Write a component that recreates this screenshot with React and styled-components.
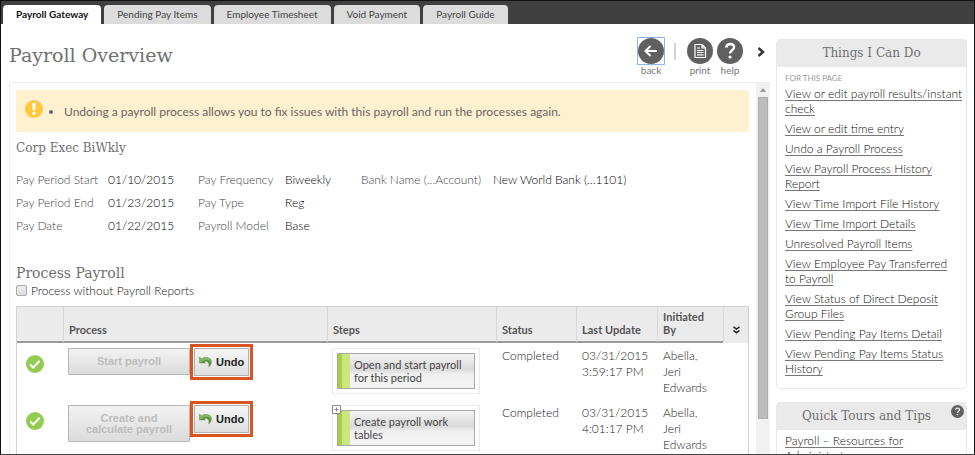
import React from "react";
import styled, { createGlobalStyle, css } from "styled-components";

const sans = 'Lato, "Open Sans", sans-serif';
const slab = '"DejaVu Serif", "Liberation Serif", serif';
const arial = '"Liberation Sans", Arial, sans-serif';

const GlobalStyle = createGlobalStyle`
  * { box-sizing: border-box; }
  body { margin: 0; background: #fff; font-family: ${sans}; font-size: 12px; font-weight: 300; color: #444; }
  button { font: inherit; color: inherit; }
  h1, h2, h3, ul, dl, dd { margin: 0; padding: 0; }
  h1, h2, h3 { font-weight: 400; }
`;

const Frame = styled.div`
  height: 100vh;
  display: flex;
  flex-direction: column;
  overflow: hidden;
  border: 1px solid #111;
  border-bottom-color: #444;
`;

const TabBar = styled.nav`
  flex: none;
  display: flex;
  gap: 3px;
  height: 23px;
  padding: 4px 2px 0;
  background: #404040;
`;

const Tab = styled.button`
  padding: 0 13px;
  border: 0;
  border-radius: 4px 4px 0 0;
  background: ${(p) => (p.$active ? "#fff" : "#dcdcdc")};
  color: ${(p) => (p.$active ? "#111" : "#444")};
  font-size: 10px;
  font-weight: ${(p) => (p.$active ? 700 : 400)};
  line-height: 17px;
  white-space: nowrap;
`;

const Body = styled.div`
  flex: 1;
  min-height: 0;
  display: flex;
  gap: 6px;
  padding: 0 7px 0 8px;
`;

const Main = styled.main`
  flex: 1;
  min-width: 0;
  display: flex;
  flex-direction: column;
`;

const PageHead = styled.header`
  flex: none;
  display: flex;
  justify-content: space-between;
  height: 58px;
  padding: 14px 5px 0 0;
`;

const PageTitle = styled.h1`
  padding-top: 3px;
  font-family: ${slab};
  font-size: 19px;
  line-height: 28px;
  color: #707070;
`;

const Tools = styled.div`
  display: flex;
  align-items: flex-start;
  gap: 4px;
`;

const Tool = styled.button`
  display: flex;
  flex-direction: column;
  align-items: center;
  width: 26px;
  padding: 0;
  border: 0;
  background: none;
  font-size: 10px;
  font-weight: 400;
  line-height: 12px;
  color: #777;
`;

const ToolIcon = styled.span`
  display: block;
  height: 26px;
  ${(p) => p.$focused && css`outline: 1px solid #8ab4f8;`}
  svg { display: block; }
`;

const Divider = styled.span`
  width: 2px;
  height: 17px;
  margin: 5px 7px 0 6px;
  background: #d3d3d3;
`;

const Collapse = styled.button`
  padding: 9px 0 0;
  margin-left: 10px;
  border: 0;
  background: none;
  svg { display: block; }
`;

const Panel = styled.section`
  flex: 1;
  min-height: 0;
  display: flex;
  gap: 7px;
  border: solid #eee;
  border-width: 1px 0 0 1px;
`;

const Content = styled.div`
  flex: 1;
  min-width: 0;
  padding: 7px 0 0 6px;
  overflow: hidden;
`;

const Scrollbar = styled.div`
  flex: none;
  display: flex;
  flex-direction: column;
  align-items: center;
  width: 14px;
  padding-top: 5px;
  background: #f1f1f1;
`;

const Thumb = styled.div`
  width: 10px;
  height: 88%;
  margin-top: 5px;
  border: 1px solid #adadad;
  background: #bcbcbc;
`;

const Alert = styled.div`
  display: flex;
  align-items: center;
  gap: 10px;
  height: 42px;
  padding: 0 9px;
  border-radius: 2px;
  background: #fff0cf;
  font-size: 12px;
  font-weight: 400;
  color: #666;
  svg { flex: none; margin-bottom: 5px; }
  ul { padding-left: 11px; }
`;

const Subtitle = styled.h2`
  margin-top: ${(p) => (p.$spaced ? "26px" : "6px")};
  font-family: ${slab};
  font-size: ${(p) => (p.$spaced ? "14px" : "12px")};
  line-height: 20px;
  color: #707070;
`;

const Facts = styled.dl`
  display: grid;
  grid-template-columns: 92px 90px 87px 76px 132px 1fr;
  grid-auto-rows: 23px;
  margin-top: 10px;
  line-height: 23px;
  white-space: nowrap;
  dt { color: #444; }
  dd { color: #000; }
`;

const CheckLabel = styled.label`
  display: flex;
  align-items: center;
  gap: 4px;
  height: 15px;
  color: #111;
`;

const Check = styled.input`
  appearance: none;
  width: 11px;
  height: 11px;
  margin: 0;
  border: 1px solid #aaa;
  border-radius: 2px;
  background: linear-gradient(#eee, #ddd);
`;

const Grid = styled.table`
  width: 100%;
  margin-top: 8px;
  table-layout: fixed;
  border-collapse: separate;
  border-spacing: 0;
  border: solid #d2d2d2;
  border-width: 1px 1px 0 1px;
`;

const Col = styled.col`
  width: ${(p) => p.$w}px;
`;

const Th = styled.th`
  height: 36px;
  padding: 0 5px 5px;
  border-left: ${(p) => (p.$first ? 0 : 1)}px solid #d8d8d8;
  border-bottom: 2px solid ${(p) => (p.$last ? "#ebebeb" : "#9b9b9b")};
  background: #ebebeb;
  font-size: 11px;
  line-height: 13px;
  font-weight: 700;
  text-align: ${(p) => (p.$last ? "center" : "left")};
  vertical-align: bottom;
  color: #555;
`;

const Td = styled.td`
  height: 57px;
  padding: ${(p) => (p.$pad ? p.$pad : "5px 0 0 6px")};
  vertical-align: top;
  line-height: 16px;
  color: #222;
  svg { display: block; }
`;

const ProcessCell = styled.div`
  display: flex;
  align-items: flex-start;
`;

const ProcessButton = styled.button`
  width: 122px;
  min-height: 27px;
  margin-top: 4px;
  padding: 1px 16px;
  border: 1px solid #b5b5b5;
  border-radius: 1px;
  background: linear-gradient(#f2f2f2, #dcdcdc);
  font: bold 11px/11px ${arial};
  color: #bdbdbd;
  ${(p) => p.$tall && css`min-height: 37px;`}
`;

const Highlight = styled.div`
  width: 63px;
  padding: 1px;
  border: 3px solid #d9541e;
`;

const UndoButton = styled.button`
  display: flex;
  align-items: center;
  gap: 4px;
  width: 100%;
  height: 28px;
  padding: 0 4px;
  border: 1px solid #b0b0b0;
  background: linear-gradient(#f6f6f6, #dedede);
  font: bold 11px/14px ${arial};
  color: #222;
  svg { flex: none; }
`;

const Step = styled.div`
  position: relative;
  width: 148px;
  padding: 4px;
  border: 1px solid #eaeaea;
`;

const StepButton = styled.button`
  display: flex;
  align-items: flex-start;
  width: 100%;
  height: 36px;
  padding: 4px 4px 0 16px;
  border: 1px solid #a8a8a8;
  background:
    linear-gradient(90deg, #a8cf3c 4px, #cbe57f 4px) left / 12px 100% no-repeat,
    linear-gradient(#f3f3f3, #dadada 45%, #f0f0f0 60%, #f4f4f4);
  font-size: 11px;
  font-weight: 400;
  line-height: 13px;
  text-align: left;
  color: #444;
`;

const Expander = styled.button`
  position: absolute;
  top: -1px;
  left: -1px;
  padding: 0;
  border: 0;
  background: #fff;
`;

const Side = styled.aside`
  flex: none;
  width: 191px;
  padding-top: 15px;
`;

const Card = styled.section`
  margin-bottom: 13px;
  padding-bottom: 12px;
  border: 1px solid #e8e8e8;
  border-radius: 4px;
`;

const CardHead = styled.header`
  position: relative;
  height: 27px;
  background: #eaeaea;
  text-align: center;
  button { position: absolute; top: 2px; right: 2px; padding: 0; border: 0; background: none; }
  svg { display: block; }
`;

const CardTitle = styled.h2`
  padding-right: ${(p) => (p.$help ? "10px" : 0)};
  font-family: ${slab};
  font-size: 12px;
  line-height: 27px;
  color: #707070;
`;

const Caption = styled.h3`
  padding: 5px 0 0 8px;
  font-size: 8px;
  line-height: 13px;
  color: #999;
`;

const Links = styled.ul`
  display: flex;
  flex-direction: column;
  gap: 5px;
  padding: ${(p) => (p.$first ? "1px" : "3px")} 0 0 8px;
  list-style: none;
  font-size: 12px;
  line-height: 15px;
  white-space: pre;
  a { color: #111; text-decoration-color: #777; text-underline-offset: 2px; }
`;

const Round = ({ size = 26, children }) => (
  <svg width={size} height={size} viewBox="0 0 26 26" fill="none">
    <circle cx="13" cy="13" r="13" fill="#606060" />
    {children}
  </svg>
);

const HelpMark = () => (
  <>
    <path d="M9.2 9.6C9.4 7.2 11 6 13.1 6c2.3 0 4 1.3 4 3.3 0 3-4.1 3-4.1 6.2" stroke="#fff" strokeWidth="2.4" />
    <circle cx="13" cy="19" r="1.6" fill="#fff" />
  </>
);

const AlertIcon = () => (
  <svg width="18" height="18" viewBox="0 0 18 18">
    <circle cx="9" cy="9" r="9" fill="#ffc83d" />
    <path d="M7.3 3h3.4l-.5 7.5H7.8z" fill="#fff" />
    <circle cx="9" cy="13.4" r="1.7" fill="#fff" />
  </svg>
);

const DoneIcon = () => (
  <svg width="18" height="18" viewBox="0 0 18 18" fill="none" role="img" aria-label="Done">
    <circle cx="9" cy="9" r="9" fill="#92cc50" />
    <path d="M4.2 9.6 7.3 12.5 13.6 5.8" stroke="#fff" strokeWidth="2" />
  </svg>
);

const UndoIcon = () => (
  <svg width="13" height="12" viewBox="0 0 13 12">
    <path d="M.3.8v6.400h6.500L5.400 5.600C8.500 4.600 10.800 7 9.200 11.500 14 8.500 14 1.800 8.500 1.400 6 1.200 4 1.600 2.400 2.500z" fill="#5f9440" />
    <path d="M.3.8v6.400L5 4.200C8 3 11 4 12.300 6.500 12.200 3.500 11 1.600 8.500 1.400 6 1.200 4 1.600 2.400 2.500z" fill="#86b567" />
  </svg>
);

const steps = [
  { process: "Start payroll", step: "Open and start payroll for this period", time: "3:59:17 PM" },
  { process: "Create and calculate payroll", step: "Create payroll work tables", time: "4:01:17 PM", tall: true },
];

const tabs = ["Payroll Gateway", "Pending Pay Items", "Employee Timesheet", "Void Payment", "Payroll Guide"];

const links = [
  "View or edit payroll results/instant\ncheck",
  "View or edit time entry",
  "Undo a Payroll Process",
  "View Payroll Process History\nReport",
  "View Time Import File History",
  "View Time Import Details",
  "Unresolved Payroll Items",
  "View Employee Pay Transferred\nto Payroll",
  "View Status of Direct Deposit\nGroup Files",
  "View Pending Pay Items Detail",
  "View Pending Pay Items Status\nHistory",
];

export default function App() {
  return (
    <Frame>
      <GlobalStyle />
      <TabBar>
        {tabs.map((t, i) => (
          <Tab key={t} $active={i === 0}>{t}</Tab>
        ))}
      </TabBar>
      <Body>
        <Main>
          <PageHead>
            <PageTitle>Payroll Overview</PageTitle>
            <Tools>
              <Tool>
                <ToolIcon $focused>
                  <Round><path d="M19 13H8M12.500 8 7.500 13l5 5" stroke="#fff" strokeWidth="2" /></Round>
                </ToolIcon>
                back
              </Tool>
              <Divider />
              <Tool>
                <ToolIcon>
                  <Round>
                    <path d="M8 6.500h7l3.500 3.500v9.500H8zM15 6.500V10h3.500M10 12.500h6.500M10 14.500h6.500M10 16.800h6.500M10 10h3" stroke="#fff" strokeWidth="1.200" />
                  </Round>
                </ToolIcon>
                print
              </Tool>
              <Tool>
                <ToolIcon><Round><HelpMark /></Round></ToolIcon>
                help
              </Tool>
              <Collapse aria-label="Collapse side bar">
                <svg width="8" height="10" viewBox="0 0 8 10" fill="none">
                  <path d="M1.500 1 6 5 1.500 9" stroke="#333" strokeWidth="2.400" />
                </svg>
              </Collapse>
            </Tools>
          </PageHead>
          <Panel>
            <Content>
              <Alert role="status">
                <AlertIcon />
                <ul><li>Undoing a payroll process allows you to fix issues with this payroll and run the processes again.</li></ul>
              </Alert>
              <Subtitle>Corp Exec BiWkly</Subtitle>
              <Facts>
                <dt>Pay Period Start</dt><dd>01/10/2015</dd>
                <dt>Pay Frequency</dt><dd>Biweekly</dd>
                <dt>Bank Name (...Account)</dt><dd>New World Bank (...1101)</dd>
                <dt>Pay Period End</dt><dd>01/23/2015</dd>
                <dt>Pay Type</dt><dd>Reg</dd>
                <dt /><dd />
                <dt>Pay Date</dt><dd>01/22/2015</dd>
                <dt>Payroll Model</dt><dd>Base</dd>
              </Facts>
              <Subtitle $spaced>Process Payroll</Subtitle>
              <CheckLabel>
                <Check type="checkbox" />
                Process without Payroll Reports
              </CheckLabel>
              <Grid>
                <colgroup>
                  <Col $w={46} /><col /><Col $w={169} /><Col $w={80} /><Col $w={81} /><Col $w={66} /><Col $w={25} />
                </colgroup>
                <thead>
                  <tr>
                    <Th $first />
                    <Th>Process</Th>
                    <Th>Steps</Th>
                    <Th>Status</Th>
                    <Th>Last Update</Th>
                    <Th>Initiated By</Th>
                    <Th $last>
                      <svg width="7" height="8" viewBox="0 0 7 8" fill="none">
                        <path d="M.5.8 3.500 3l3-2.200M.5 4.500l3 2.200 3-2.200" stroke="#222" strokeWidth="1.500" />
                      </svg>
                    </Th>
                  </tr>
                </thead>
                <tbody>
                  {steps.map((s) => (
                    <tr key={s.process}>
                      <Td $pad="12px 0 0 9px"><DoneIcon /></Td>
                      <Td $pad="1px 0 0 5px">
                        <ProcessCell>
                          <ProcessButton disabled $tall={s.tall}>{s.process}</ProcessButton>
                          <Highlight><UndoButton><UndoIcon />Undo</UndoButton></Highlight>
                        </ProcessCell>
                      </Td>
                      <Td $pad="5px 0 0 5px">
                        <Step>
                          <StepButton>{s.step}</StepButton>
                          {s.tall && (
                            <Expander aria-label="Expand step">
                              <svg width="9" height="9" viewBox="0 0 9 9" fill="none">
                                <path d="M.5.5h8v8h-8zM2.500 4.500h4M4.500 2.500v4" stroke="#888" />
                              </svg>
                            </Expander>
                          )}
                        </Step>
                      </Td>
                      <Td>Completed</Td>
                      <Td>03/31/2015 {s.time}</Td>
                      <Td $pad="5px 14px 0 6px">Abella, Jeri Edwards</Td>
                      <Td />
                    </tr>
                  ))}
                </tbody>
              </Grid>
            </Content>
            <Scrollbar>
              <svg width="6" height="4" viewBox="0 0 6 4"><path d="M0 4 3 0l3 4z" fill="#999" /></svg>
              <Thumb />
            </Scrollbar>
          </Panel>
        </Main>
        <Side>
          <Card>
            <CardHead><CardTitle>Things I Can Do</CardTitle></CardHead>
            <Caption>FOR THIS PAGE</Caption>
            <Links $first>
              {links.map((l) => (
                <li key={l}><a href="#">{l}</a></li>
              ))}
            </Links>
          </Card>
          <Card>
            <CardHead>
              <CardTitle $help>Quick Tours and Tips</CardTitle>
              <button aria-label="Help"><Round size={13}><HelpMark /></Round></button>
            </CardHead>
            <Links>
              <li><a href="#">{"Payroll – Resources for\nAdministrators"}</a></li>
            </Links>
          </Card>
        </Side>
      </Body>
    </Frame>
  );
}
